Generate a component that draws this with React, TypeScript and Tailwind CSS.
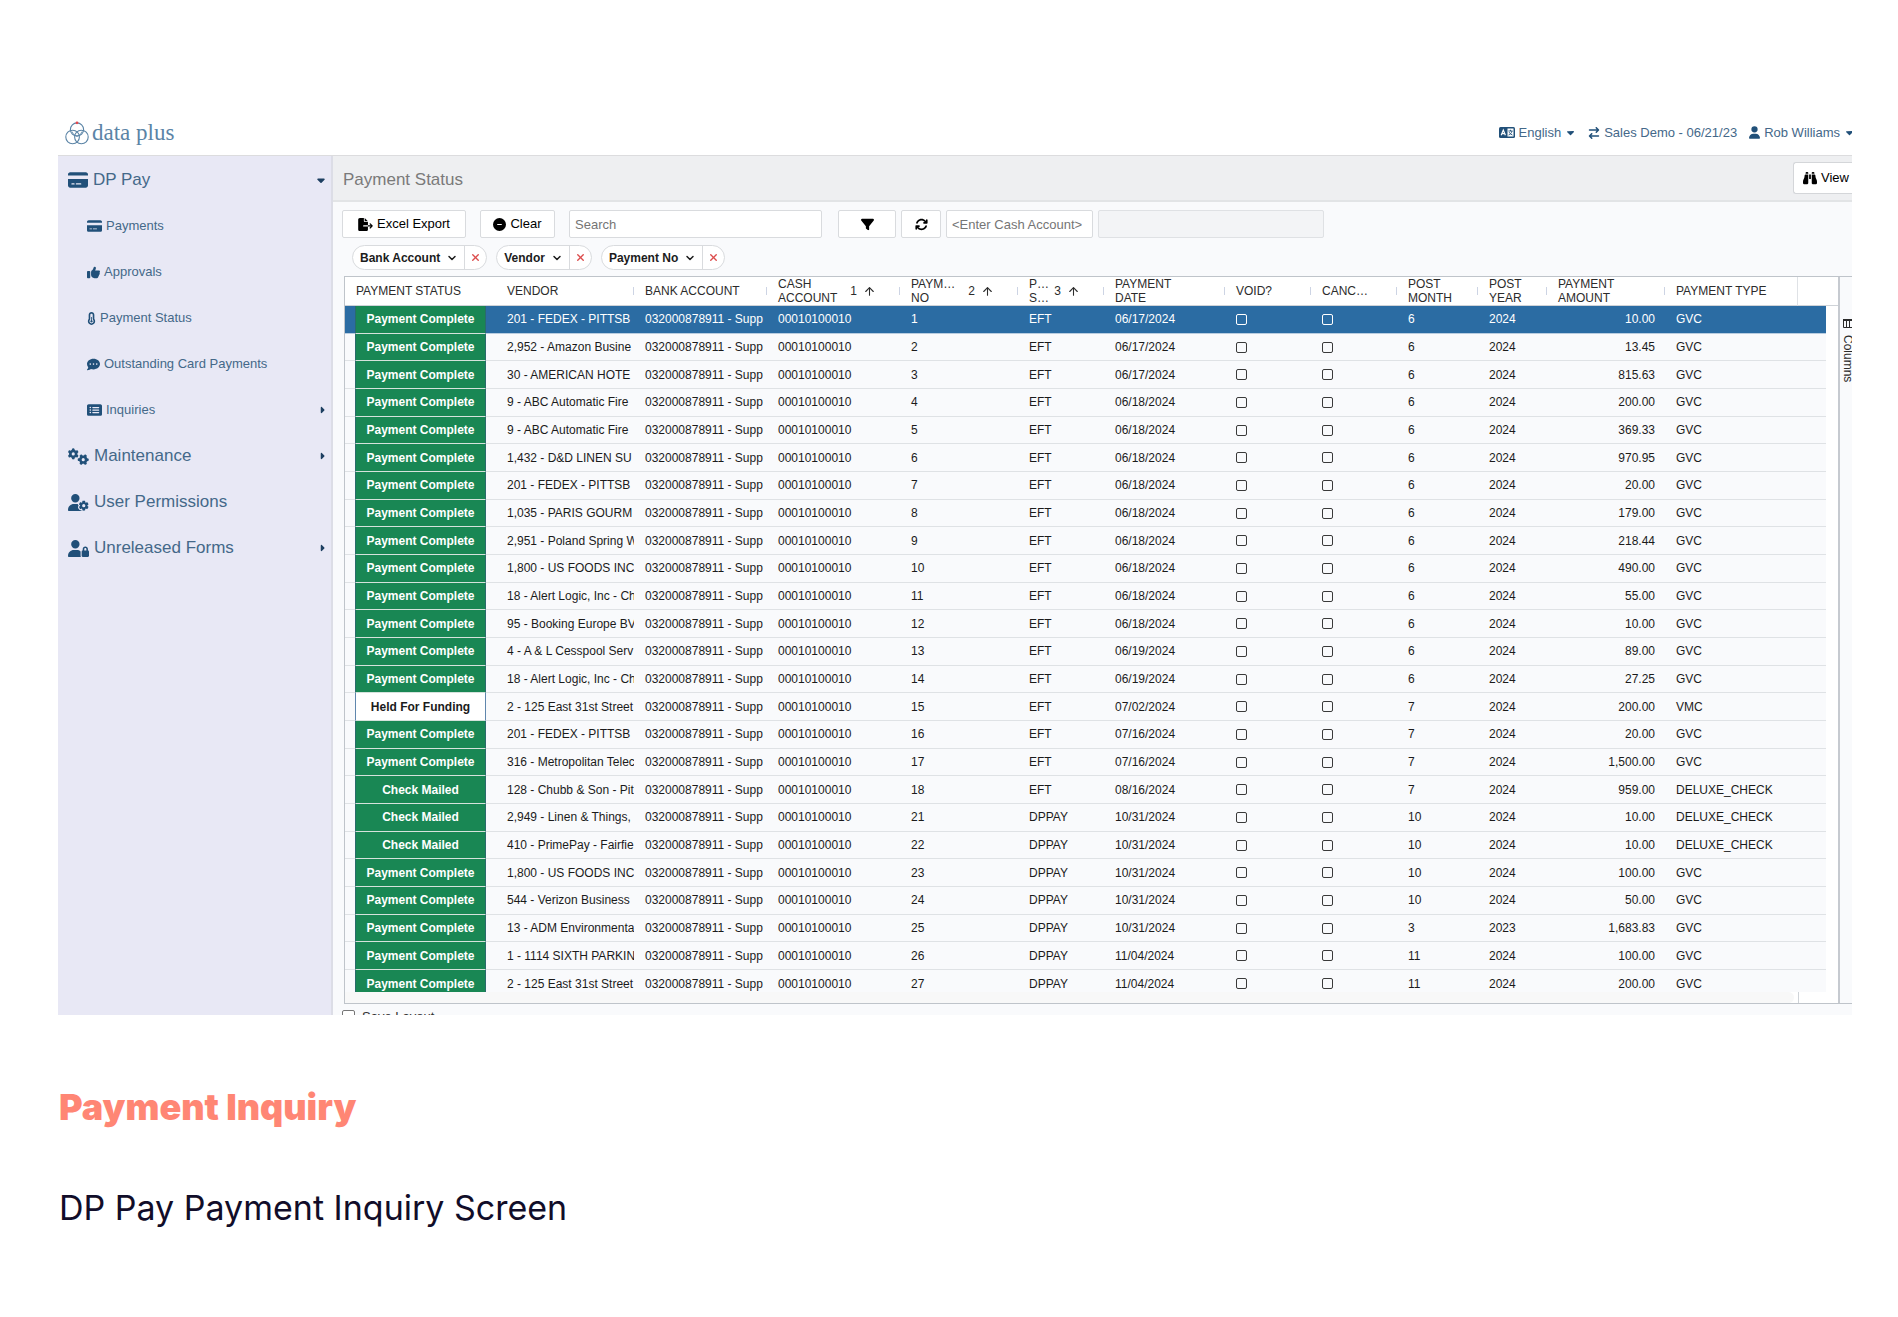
import { useState } from "react";
import type { ReactNode } from "react";
import type { IconType } from "react-icons";
import {
  FaArrowRightArrowLeft,
  FaArrowsRotate,
  FaBinoculars,
  FaCaretDown,
  FaCaretRight,
  FaCircleMinus,
  FaCommentDots,
  FaCreditCard,
  FaFileExport,
  FaFilter,
  FaGears,
  FaRectangleList,
  FaTemperatureHalf,
  FaThumbsUp,
  FaUser,
  FaUserGear,
  FaUserLock,
} from "react-icons/fa6";
import { ArrowUp, ChevronDown, X } from "lucide-react";
import clsx from "clsx";

interface IPayment {
  status: string;
  vendor: string;
  no: number;
  source: string;
  date: string;
  month: number;
  year: number;
  amount: string;
  type: string;
}

const row = (
  status: string,
  vendor: string,
  no: number,
  source: string,
  date: string,
  month: number,
  year: number,
  amount: string,
  type: string
): IPayment => ({ status, vendor, no, source, date, month, year, amount, type });

const COMPLETE = "Payment Complete";
const HELD = "Held For Funding";
const MAILED = "Check Mailed";

const payments: IPayment[] = [
  row(COMPLETE, "201 - FEDEX - PITTSB", 1, "EFT", "06/17/2024", 6, 2024, "10.00", "GVC"),
  row(COMPLETE, "2,952 - Amazon Busine", 2, "EFT", "06/17/2024", 6, 2024, "13.45", "GVC"),
  row(COMPLETE, "30 - AMERICAN HOTE", 3, "EFT", "06/17/2024", 6, 2024, "815.63", "GVC"),
  row(COMPLETE, "9 - ABC Automatic Fire", 4, "EFT", "06/18/2024", 6, 2024, "200.00", "GVC"),
  row(COMPLETE, "9 - ABC Automatic Fire", 5, "EFT", "06/18/2024", 6, 2024, "369.33", "GVC"),
  row(COMPLETE, "1,432 - D&D LINEN SU", 6, "EFT", "06/18/2024", 6, 2024, "970.95", "GVC"),
  row(COMPLETE, "201 - FEDEX - PITTSB", 7, "EFT", "06/18/2024", 6, 2024, "20.00", "GVC"),
  row(COMPLETE, "1,035 - PARIS GOURM", 8, "EFT", "06/18/2024", 6, 2024, "179.00", "GVC"),
  row(COMPLETE, "2,951 - Poland Spring W", 9, "EFT", "06/18/2024", 6, 2024, "218.44", "GVC"),
  row(COMPLETE, "1,800 - US FOODS INC", 10, "EFT", "06/18/2024", 6, 2024, "490.00", "GVC"),
  row(COMPLETE, "18 - Alert Logic, Inc - Ch", 11, "EFT", "06/18/2024", 6, 2024, "55.00", "GVC"),
  row(COMPLETE, "95 - Booking Europe BV", 12, "EFT", "06/18/2024", 6, 2024, "10.00", "GVC"),
  row(COMPLETE, "4 - A & L Cesspool Serv", 13, "EFT", "06/19/2024", 6, 2024, "89.00", "GVC"),
  row(COMPLETE, "18 - Alert Logic, Inc - Ch", 14, "EFT", "06/19/2024", 6, 2024, "27.25", "GVC"),
  row(HELD, "2 - 125 East 31st Street", 15, "EFT", "07/02/2024", 7, 2024, "200.00", "VMC"),
  row(COMPLETE, "201 - FEDEX - PITTSB", 16, "EFT", "07/16/2024", 7, 2024, "20.00", "GVC"),
  row(COMPLETE, "316 - Metropolitan Telec", 17, "EFT", "07/16/2024", 7, 2024, "1,500.00", "GVC"),
  row(MAILED, "128 - Chubb & Son - Pit", 18, "EFT", "08/16/2024", 7, 2024, "959.00", "DELUXE_CHECK"),
  row(MAILED, "2,949 - Linen & Things,", 21, "DPPAY", "10/31/2024", 10, 2024, "10.00", "DELUXE_CHECK"),
  row(MAILED, "410 - PrimePay - Fairfie", 22, "DPPAY", "10/31/2024", 10, 2024, "10.00", "DELUXE_CHECK"),
  row(COMPLETE, "1,800 - US FOODS INC", 23, "DPPAY", "10/31/2024", 10, 2024, "100.00", "GVC"),
  row(COMPLETE, "544 - Verizon Business", 24, "DPPAY", "10/31/2024", 10, 2024, "50.00", "GVC"),
  row(COMPLETE, "13 - ADM Environmenta", 25, "DPPAY", "10/31/2024", 3, 2023, "1,683.83", "GVC"),
  row(COMPLETE, "1 - 1114 SIXTH PARKIN", 26, "DPPAY", "11/04/2024", 11, 2024, "100.00", "GVC"),
  row(COMPLETE, "2 - 125 East 31st Street", 27, "DPPAY", "11/04/2024", 11, 2024, "200.00", "GVC"),
];

const Logo = () => (
  <a href="#" className="flex items-center gap-[3px] text-[#5b84a6]">
    <svg width="24" height="24" viewBox="0 0 24 24" fill="none" stroke="currentColor" strokeWidth="1.1">
      <circle cx="12" cy="8.5" r="6.6" />
      <circle cx="7.6" cy="16" r="6.8" />
      <circle cx="16.4" cy="16" r="6.8" />
      <path d="M7 10.5a6 6 0 0 0 5 4.5 6 6 0 0 0 5-4.5" strokeWidth="0.8" />
      <circle cx="12" cy="1.8" r="1.4" fill="#e5484d" stroke="none" />
    </svg>
    <span className="font-['Liberation_Serif',serif] text-[23px] leading-6">data plus</span>
  </a>
);

// id-card style badge with an "A" tile on the left and an outlined tile on the right
const LanguageIcon = () => (
  <svg width="16" height="11" viewBox="0 0 16 11" className="text-[#215079]">
    <rect width="16" height="11" rx="1.5" fill="currentColor" />
    <path d="M2.2 8.2 4.3 3l2.1 5.2M3 6.6h2.6" fill="none" stroke="#fff" strokeWidth="1.2" />
    <rect x="8.5" y="1.5" width="6" height="8" fill="#fff" />
    <path d="M9.4 4h4.2M11.5 2.8V4M13 4c-.4 2-1.700 3.400-3.400 4M10.200 5.200c.6 1.300 1.700 2.300 3.200 2.800" fill="none" stroke="currentColor" strokeWidth="0.9" />
  </svg>
);

interface INavItem {
  icon: IconType;
  size: string;
  label: string;
  sub?: boolean;
  caret?: "down" | "right";
}

const nav: INavItem[] = [
  { icon: FaCreditCard, size: "w-5 h-[18px]", label: "DP Pay", caret: "down" },
  { icon: FaCreditCard, size: "w-[15px] h-[14px]", label: "Payments", sub: true },
  { icon: FaThumbsUp, size: "w-[13px] h-[13px]", label: "Approvals", sub: true },
  { icon: FaTemperatureHalf, size: "w-[9px] h-[13px]", label: "Payment Status", sub: true },
  { icon: FaCommentDots, size: "w-[13px] h-[13px]", label: "Outstanding Card Payments", sub: true },
  { icon: FaRectangleList, size: "w-[15px] h-[14px]", label: "Inquiries", sub: true, caret: "right" },
  { icon: FaGears, size: "w-[21px] h-[17px]", label: "Maintenance", caret: "right" },
  { icon: FaUserGear, size: "w-[21px] h-[17px]", label: "User Permissions" },
  { icon: FaUserLock, size: "w-[21px] h-[17px]", label: "Unreleased Forms", caret: "right" },
];

const NavItem = ({ icon: Icon, size, label, sub, caret }: INavItem) => (
  <a
    href="#"
    className={clsx(
      "flex h-[46px] items-center pr-1",
      sub ? "gap-1 pl-[29px] text-[13px]" : "gap-[5px] pl-[10px] text-[17px]"
    )}
  >
    <Icon className={clsx("shrink-0 text-[#215079]", size)} />
    <span>{label}</span>
    {caret === "down" && <FaCaretDown className="ml-auto size-3 text-[#1d3f61]" />}
    {caret === "right" && <FaCaretRight className="ml-auto size-[10px] text-[#1d3f61]" />}
  </a>
);

const Chip = ({ label }: { label: string }) => (
  <div className="flex h-[25px] items-stretch rounded-full border border-[#d9dbde] bg-white text-xs font-bold text-[#1c1c1c]">
    <button className="flex items-center gap-[6px] pr-[6px] pl-[7px]">
      {label}
      <ChevronDown size={12} strokeWidth={3} />
    </button>
    <button aria-label={`Remove ${label}`} className="flex w-[22px] items-center justify-center border-l border-[#d9dbde]">
      <X size={11} strokeWidth={3} className="text-[#dc4c4c]" />
    </button>
  </div>
);

interface IHead {
  children?: ReactNode;
  order?: number;
  divider?: boolean;
  className?: string;
}

const Head = ({ children, order, divider = true, className = "pl-[11px]" }: IHead) => (
  <th className="border-b border-[#cfd3d8] bg-white p-0 text-left font-normal">
    <div className={clsx("flex h-7 items-center leading-[14px] whitespace-nowrap", className)}>
      <span>{children}</span>
      {order && (
        <span className="mr-[23px] ml-auto flex items-center gap-[6px]">
          {order}
          <ArrowUp size={13} strokeWidth={2} />
        </span>
      )}
      {divider && <span className={clsx("h-2 w-px bg-[#cdd4e4]", !order && "ml-auto")} />}
    </div>
  </th>
);

const Box = ({ label, light }: { label: string; light: boolean }) => (
  <input
    type="checkbox"
    aria-label={label}
    className={clsx(
      "block size-[11px] appearance-none rounded-[2px] border checked:bg-current",
      light ? "border-white" : "border-[#3a3a3a]"
    )}
  />
);

const Grid = () => {
  const [selected, setSelected] = useState(1);

  return (
    <table className="h-[721px] w-full table-fixed border-separate border-spacing-0 text-xs">
      <colgroup>
        <col className="w-[10px]" />
        <col className="w-[131px]" />
        <col className="w-[148px]" />
        <col className="w-[133px]" />
        <col className="w-[133px]" />
        <col className="w-[118px]" />
        <col className="w-[86px]" />
        <col className="w-[121px]" />
        <col className="w-[86px]" />
        <col className="w-[86px]" />
        <col className="w-[81px]" />
        <col className="w-[69px]" />
        <col className="w-[118px]" />
        <col className="w-[133px]" />
        <col />
        <col className="w-[12px]" />
      </colgroup>
      <thead className="text-[#2b2b2b]">
        <tr className="h-[29px]">
          <Head divider={false} />
          <Head divider={false} className="pl-px">
            PAYMENT STATUS
          </Head>
          <Head className="pl-[21px]">VENDOR</Head>
          <Head>BANK ACCOUNT</Head>
          <Head order={1}>
            CASH
            <br />
            ACCOUNT
          </Head>
          <Head order={2}>
            PAYM…
            <br />
            NO
          </Head>
          <Head order={3}>
            P…
            <br />
            S…
          </Head>
          <Head>
            PAYMENT
            <br />
            DATE
          </Head>
          <Head>VOID?</Head>
          <Head>CANC…</Head>
          <Head>
            POST
            <br />
            MONTH
          </Head>
          <Head>
            POST
            <br />
            YEAR
          </Head>
          <Head>
            PAYMENT
            <br />
            AMOUNT
          </Head>
          <th className="border-r border-b border-[#dfe2e6] border-b-[#cfd3d8] bg-white p-0 pl-[11px] text-left font-normal">
            PAYMENT TYPE
          </th>
          <Head divider={false} />
          <Head divider={false} />
        </tr>
      </thead>
      <tbody>
        {payments.map((item) => {
          const active = item.no === selected;
          const cell = clsx(
            "overflow-hidden border-b p-0 whitespace-nowrap",
            active ? "border-[#b9cde0] bg-[#2b6ca3] text-white" : "border-[#dfe2e5] text-[#1b1b1b]"
          );
          const padded = clsx(cell, "pl-[11px]");
          return (
            <tr key={item.no} onClick={() => setSelected(item.no)}>
              <td className={cell} />
              <td
                className={clsx(
                  "border-x border-b border-b-[#d5e2dc] p-0 text-center font-bold whitespace-nowrap",
                  item.status === HELD
                    ? "border-x-[#5f86ad] bg-white text-[#1b1b1b]"
                    : "border-x-[#2a6b6b] bg-[#198754] text-white"
                )}
              >
                {item.status}
              </td>
              <td className={clsx(cell, "pl-[21px]")}>{item.vendor}</td>
              <td className={padded}>032000878911 - Supp</td>
              <td className={padded}>00010100010</td>
              <td className={padded}>{item.no}</td>
              <td className={padded}>{item.source}</td>
              <td className={padded}>{item.date}</td>
              <td className={padded}>
                <Box label={`Void payment ${item.no}`} light={active} />
              </td>
              <td className={padded}>
                <Box label={`Cancel payment ${item.no}`} light={active} />
              </td>
              <td className={padded}>{item.month}</td>
              <td className={padded}>{item.year}</td>
              <td className={clsx(cell, "pr-[10px] text-right")}>{item.amount}</td>
              <td className={padded}>{item.type}</td>
              <td className={cell} />
              <td className="bg-white p-0" />
            </tr>
          );
        })}
      </tbody>
    </table>
  );
};

const control = "h-7 rounded-[2px] border border-[#d9dbde] bg-white";

const App = () => {
  return (
    <div className="bg-white pt-[110px] pr-[46px] pb-[88px] pl-[58px] font-['Liberation_Sans',Arial,sans-serif]">
      <div className="overflow-hidden text-[#446889]">
        <header className="flex h-[46px] items-center border-b border-[#dcdcde] pl-[7px]">
          <Logo />
          <div className="ml-auto flex items-center gap-3 text-[13px] whitespace-nowrap">
            <button className="flex items-center gap-1">
              <LanguageIcon />
              English
              <FaCaretDown className="size-[11px] text-[#215079]" />
            </button>
            <button className="flex items-center gap-1">
              <FaArrowRightArrowLeft className="size-3 text-[#215079]" />
              Sales Demo - 06/21/23
            </button>
            <button className="-mr-[3px] flex items-center gap-1">
              <FaUser className="h-[13px] w-[11px] text-[#215079]" />
              Rob Williams
              <FaCaretDown className="size-[11px] text-[#215079]" />
            </button>
          </div>
        </header>

        <div className="flex">
          <nav className="w-[275px] shrink-0 border-r-2 border-[#dcdde6] bg-[#e8e8f5] pt-px">
            {nav.map((item) => (
              <NavItem key={item.label} {...item} />
            ))}
          </nav>

          <main className="min-w-0 flex-1 bg-[#f9fafc]">
            <div className="flex h-[46px] items-center border-b-2 border-[#e2e4e6] bg-[#eeeff1] pl-[10px]">
              <h1 className="pt-1 text-[17px] text-[#7a7a7a]">Payment Status</h1>
              <button className="ml-auto flex h-8 items-center gap-1 rounded-l-[3px] border border-r-0 border-[#d4d6d9] bg-white pr-[3px] pl-[9px] text-[13px] text-black">
                <FaBinoculars className="size-[14px]" />
                View
              </button>
            </div>

            <div className="flex items-center pt-2 pl-[9px] text-[13px] text-black">
              <button className={clsx(control, "mr-[14px] flex w-[124px] items-center justify-center gap-1")}>
                <FaFileExport className="h-[13px] w-[15px]" />
                Excel Export
              </button>
              <button className={clsx(control, "mr-[14px] flex w-[75px] items-center justify-center gap-1")}>
                <FaCircleMinus className="size-[13px]" />
                Clear
              </button>
              <input aria-label="Search" placeholder="Search" className={clsx(control, "mr-4 w-[253px] px-[5px] placeholder:text-[#757575]")} />
              <button aria-label="Filter" className={clsx(control, "mr-[5px] flex w-[58px] items-center justify-center")}>
                <FaFilter className="size-[13px]" />
              </button>
              <button aria-label="Refresh" className={clsx(control, "mr-[5px] flex w-10 items-center justify-center")}>
                <FaArrowsRotate className="size-[13px]" />
              </button>
              <input
                aria-label="Cash account"
                placeholder="<Enter Cash Account>"
                className={clsx(control, "mr-[5px] w-[147px] px-[5px] placeholder:text-[#757575]")}
              />
              <input aria-label="Cash account name" disabled className="h-7 w-[226px] rounded-[2px] border border-[#dfe1e4] bg-[#f3f4f6]" />
            </div>

            <div className="flex gap-[9px] pt-[7px] pb-[6px] pl-[19px]">
              <Chip label="Bank Account" />
              <Chip label="Vendor" />
              <Chip label="Payment No" />
            </div>

            <div className="ml-[11px] flex border-y border-l border-[#bfc4ca]">
              <div className="min-w-0 flex-1">
                <div className="h-[715px] overflow-hidden">
                  <Grid />
                </div>
                <div className="flex h-[11px] bg-white">
                  <div className="flex-1 rounded-r-full bg-[#f8f8f8]" />
                  <div className="ml-1 w-10 border-l border-[#cfd3d8]" />
                </div>
              </div>
              <aside className="w-[14px] border-l-2 border-[#c6cad0] pt-[42px] pl-[2px]">
                <button className="flex items-center gap-[7px] text-xs leading-3 text-[#2b2b2b] [writing-mode:vertical-rl]">
                  <svg width="10" height="9" viewBox="0 0 10 9" fill="none" stroke="currentColor">
                    <path d="M.5 1.500h9v7h-9zM3.500 2v6.500M6.500 2v6.500" />
                    <path d="M0 1h10" strokeWidth="2" />
                  </svg>
                  Columns
                </button>
              </aside>
            </div>

            <label className="flex h-[11px] items-start gap-[7px] overflow-hidden pt-[6px] pl-[9px] text-[13px] leading-[14px] text-[#333]">
              <input type="checkbox" className="size-[13px] shrink-0 appearance-none rounded-[2px] border border-[#767676] bg-white" />
              Save Layout
            </label>
          </main>
        </div>
      </div>

      <section className="pl-px font-['Inter',sans-serif]">
        <h2 className="pt-[72px] text-4xl font-black text-[#ff8674]">Payment Inquiry</h2>
        <p className="pt-[61px] text-[34px] leading-10 text-[#110d29]">DP Pay Payment Inquiry Screen</p>
      </section>
    </div>
  );
};

export default App;
